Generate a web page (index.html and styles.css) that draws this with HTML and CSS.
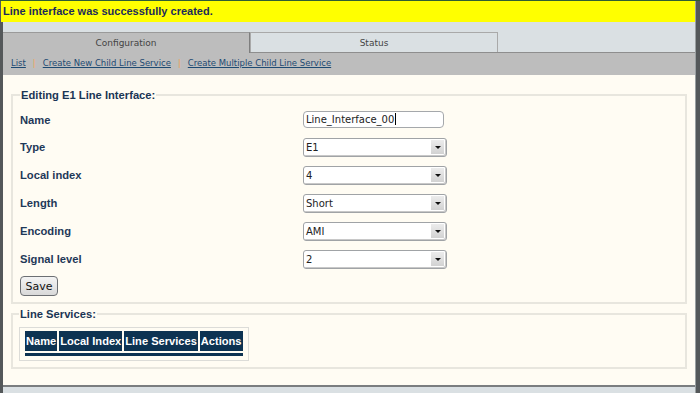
FILE: index.html
```html
<!DOCTYPE html>
<html>
<head>
<meta charset="utf-8">
<link rel="stylesheet" href="styles.css">
</head>
<body>
<div class="topline"></div>
<div class="shell">
  <div class="main">
    <div class="banner">Line interface was successfully created.</div>
    <div class="tabs">
      <div class="tab active">Configuration</div>
      <div class="tab">Status</div>
    </div>
    <div class="linkbar">
      <a href="#">List</a><span class="sep">|</span><a href="#">Create New Child Line Service</a><span class="sep">|</span><a href="#">Create Multiple Child Line Service</a>
    </div>
    <div class="content">
      <fieldset class="box">
        <legend>Editing E1 Line Interface:</legend>
        <div class="form-grid">
          <div class="label">Name</div>
          <div class="field"><div class="textbox">Line_Interface_00<span class="caret"></span></div></div>
          <div class="label">Type</div>
          <div class="field"><div class="select"><span class="val">E1</span><span class="btn"><span class="arrow"></span></span></div></div>
          <div class="label">Local index</div>
          <div class="field"><div class="select"><span class="val">4</span><span class="btn"><span class="arrow"></span></span></div></div>
          <div class="label">Length</div>
          <div class="field"><div class="select"><span class="val">Short</span><span class="btn"><span class="arrow"></span></span></div></div>
          <div class="label">Encoding</div>
          <div class="field"><div class="select"><span class="val">AMI</span><span class="btn"><span class="arrow"></span></span></div></div>
          <div class="label">Signal level</div>
          <div class="field"><div class="select"><span class="val">2</span><span class="btn"><span class="arrow"></span></span></div></div>
        </div>
        <div class="actions"><button class="save">Save</button></div>
      </fieldset>
      <fieldset class="box second">
        <legend>Line Services:</legend>
        <div class="tablebox">
          <table class="services">
            <thead>
              <tr><th>Name</th><th>Local Index</th><th>Line Services</th><th>Actions</th></tr>
            </thead>
            <tbody>
              <tr class="bar"><td colspan="4"></td></tr>
            </tbody>
          </table>
        </div>
      </fieldset>
    </div>
    <div class="footer"></div>
  </div>
</div>
</body>
</html>
```
FILE: styles.css
```css
html, body {
  margin: 0;
  padding: 0;
  height: 100%;
  overflow: hidden;
}
body {
  background: #54585a;
  font-family: "DejaVu Sans", sans-serif;
}
.topline {
  height: 1px;
  background: #2f5e34;
}
.shell {
  display: flex;
  padding: 0 4px 0 3px;
  height: 392px;
}
.main {
  flex: 1;
  display: flex;
  flex-direction: column;
  background: #dae0e3;
  border-right: 1px solid #9aa0a2;
}
.banner {
  height: 21px;
  line-height: 21px;
  background: #ffff00;
  color: #1c2b5a;
  font-family: "Liberation Sans", Arial, sans-serif;
  font-weight: bold;
  font-size: 11px;
  padding-left: 2px;
  margin-left: -2px;
}
.tabs {
  display: flex;
  height: 20px;
  margin-top: 10px;
  border-bottom: 1px solid #8e8e8e;
}
.tab {
  width: 246px;
  height: 19px;
  line-height: 20px;
  text-align: center;
  font-size: 9px;
  color: #444;
  border: 1px solid #a9a9a9;
  border-bottom: none;
  background: #dae0e3;
}
.tab.active {
  background: #bdbdbd;
  border-color: #9a9a9a;
  border-right-color: #7e7e7e;
  border-left: none;
  height: 20px;
  margin-bottom: -1px;
}
.linkbar {
  height: 22px;
  line-height: 20px;
  background: #bdbdbd;
  padding-left: 8px;
  font-size: 8.5px;
}
.linkbar a {
  color: #1d4a72;
  text-decoration: underline;
}
.sep {
  color: #f0a34a;
  padding: 0 7px;
}
.content {
  background: #fffcf3;
  height: 310px;
  padding: 14px 8px 0 8px;
  box-sizing: border-box;
}
.box {
  margin: 0;
  border: 2px solid #e8e6de;
  padding: 5px 7px 6px 7px;
  color: #1e3858;
  font-family: "Liberation Sans", Arial, sans-serif;
  font-weight: bold;
  font-size: 11px;
}
.box legend {
  padding: 0 1px;
  font-size: 11.2px;
  color: #1a3555;
}
.form-grid {
  display: grid;
  grid-template-columns: 283px 1fr;
  grid-template-rows: 27px repeat(5, 28px);
  align-items: center;
}
.label {
  font-size: 11.2px;
  color: #1e3858;
}
.field {
  display: flex;
  align-items: center;
}
.textbox {
  width: 137px;
  height: 15px;
  line-height: 15px;
  border: 1px solid #a5a8ab;
  border-radius: 4px;
  background: #fff;
  font-family: "DejaVu Sans", sans-serif;
  font-weight: normal;
  font-size: 10px;
  color: #222;
  padding-left: 2px;
  box-sizing: content-box;
  margin-top: -1px;
}
.caret {
  display: inline-block;
  width: 1px;
  height: 12px;
  background: #000;
  vertical-align: -2px;
  margin-left: 1px;
}
.select {
  width: 140px;
  height: 17px;
  display: flex;
  align-items: center;
  border: 1px solid #a0a3a6;
  border-radius: 3px;
  background: #fff;
  box-shadow: inset -1px -1px 0 #c8c8c8;
  font-family: "DejaVu Sans", sans-serif;
  font-weight: normal;
  font-size: 10px;
  color: #222;
  padding-left: 2px;
}
.select .val {
  flex: 1;
}
.select .btn {
  width: 13px;
  height: 14px;
  margin-right: 2px;
  background: linear-gradient(#ececec, #d2d2d2);
  display: flex;
  align-items: center;
  justify-content: center;
}
.arrow {
  width: 0;
  height: 0;
  border-left: 3px solid transparent;
  border-right: 3px solid transparent;
  border-top: 3px solid #111;
  margin-top: 1px;
}
.actions {
  padding-top: 3px;
}
.save {
  width: 38px;
  height: 20px;
  border: 1px solid #6c6f73;
  border-radius: 4px;
  background: linear-gradient(#f4f4f4, #d9d9d9);
  font-family: "DejaVu Sans", sans-serif;
  font-size: 11px;
  color: #111;
  padding: 0;
}
.second {
  margin-top: 4px;
  padding: 7px 7px 4px 6px;
}
.tablebox {
  display: inline-block;
  border: 1px solid #dcdcd8;
  padding: 3px 3px 4px 3px;
}
.services {
  border-collapse: separate;
  border-spacing: 2px 0;
}
.services th {
  background: #0d3352;
  color: #fff;
  font-family: "Liberation Sans", Arial, sans-serif;
  font-weight: bold;
  font-size: 11.1px;
  height: 20px;
  line-height: 20px;
  padding: 0 1px;
  white-space: nowrap;
}
.services tr.bar td {
  height: 0;
  padding: 0;
  border-top: 2px solid #fffcf3;
  border-bottom: 3px solid #0d3352;
}
.footer {
  border-top: 2px solid #7a7d7f;
  flex: 1;
  background: #dae0e3;
}
```
